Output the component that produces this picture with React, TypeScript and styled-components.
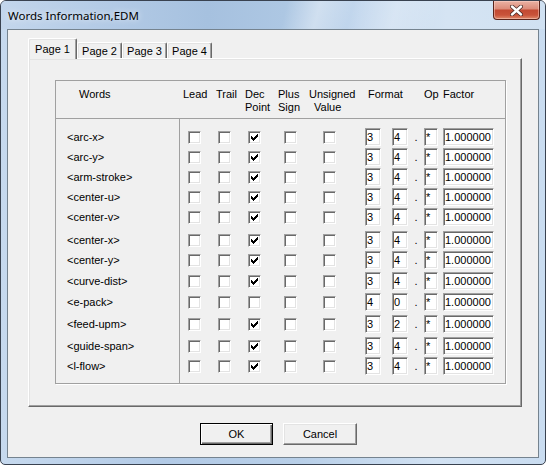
import React from "react";
import styled, { createGlobalStyle, css } from "styled-components";

const GlobalStyle = createGlobalStyle`
  html, body {
    margin: 0;
    padding: 0;
    background: #ffffff;
  }
  body {
    width: 546px;
    height: 465px;
    overflow: hidden;
  }
`;

type Word = {
  name: string;
  dec: boolean;
  fmt: [string, string];
  h: number;
};

// row heights copied from the dialog: rows are not evenly spaced
const words: Word[] = [
  { name: "<arc-x>", dec: true, fmt: ["3", "4"], h: 20 },
  { name: "<arc-y>", dec: true, fmt: ["3", "4"], h: 20 },
  { name: "<arm-stroke>", dec: true, fmt: ["3", "4"], h: 20 },
  { name: "<center-u>", dec: true, fmt: ["3", "4"], h: 20 },
  { name: "<center-v>", dec: true, fmt: ["3", "4"], h: 20 },
  { name: "<center-x>", dec: true, fmt: ["3", "4"], h: 23 },
  { name: "<center-y>", dec: true, fmt: ["3", "4"], h: 20 },
  { name: "<curve-dist>", dec: true, fmt: ["3", "4"], h: 21 },
  { name: "<e-pack>", dec: false, fmt: ["4", "0"], h: 21 },
  { name: "<feed-upm>", dec: true, fmt: ["3", "2"], h: 22 },
  { name: "<guide-span>", dec: true, fmt: ["3", "4"], h: 22 },
  { name: "<l-flow>", dec: true, fmt: ["3", "4"], h: 20 },
];

const tabs = ["Page 1", "Page 2", "Page 3", "Page 4"];

const Window = styled.div`
  width: 546px;
  height: 465px;
  box-sizing: border-box;
  display: flex;
  flex-direction: column;
  border: 1px solid #394250;
  border-radius: 6px 6px 5px 5px;
  overflow: hidden;
  background: linear-gradient(
    90deg,
    #c6d9ee 0%,
    #b2cae6 30%,
    #b8cfe8 55%,
    #d2e2f3 80%,
    #c9dcf0 100%
  );
  font-family: "Liberation Sans", Arial, sans-serif;
  font-size: 11px;
  color: #000;
`;

const TitleBar = styled.div`
  flex: none;
  height: 28px;
  display: flex;
  align-items: flex-start;
  justify-content: space-between;
  padding-left: 7px;
  background:
    linear-gradient(
      105deg,
      rgba(255, 255, 255, 0) 0%,
      rgba(255, 255, 255, 0) 52%,
      rgba(255, 255, 255, 0.35) 58%,
      rgba(255, 255, 255, 0) 64%,
      rgba(255, 255, 255, 0.25) 72%,
      rgba(255, 255, 255, 0) 80%
    ),
    linear-gradient(
      90deg,
      #c3d6ec 0%,
      #b4cbe6 18%,
      #a6c1df 38%,
      #adc7e3 52%,
      #c4d8ee 66%,
      #d5e4f3 82%,
      #d0e1f2 100%
    );
`;

const Caption = styled.span`
  margin-top: 8px;
  line-height: 14px;
  font-family: "Noto Sans", "Open Sans", sans-serif;
  font-size: 11.5px;
  color: #000;
  text-shadow: 0 0 6px rgba(255, 255, 255, 0.9);
`;

const CloseButton = styled.div`
  width: 47px;
  height: 19px;
  margin-right: 5px;
  box-sizing: border-box;
  display: flex;
  align-items: center;
  justify-content: center;
  border: 1px solid #5a241b;
  border-top: none;
  border-radius: 0 0 4px 4px;
  background: linear-gradient(
    180deg,
    #eab2a4 0%,
    #dc8d7b 42%,
    #c34a33 52%,
    #c9533a 78%,
    #e08a6c 100%
  );
  box-shadow: inset 0 0 0 1px rgba(255, 220, 210, 0.45);
`;

const FrameBody = styled.div`
  flex: 1;
  display: flex;
  padding: 0 6px 6px 6px;
`;

const Client = styled.div`
  flex: 1;
  box-sizing: border-box;
  display: flex;
  flex-direction: column;
  border: 1px solid #75838f;
  background: #f0f0f0;
  padding: 8px 0 0 20px;
`;

const TabStrip = styled.div`
  height: 20px;
  display: flex;
  align-items: flex-end;
  padding-left: 2px;
`;

const Tab = styled.div<{ $active?: boolean }>`
  box-sizing: border-box;
  width: 45px;
  height: 16px;
  padding-top: 1px;
  line-height: 14px;
  text-align: center;
  background: #f0f0f0;
  border-left: 1px solid #ffffff;
  border-top: 1px solid #ffffff;
  border-right: 1px solid #696969;
  border-radius: 2px 2px 0 0;
  box-shadow: inset -1px 0 0 #a0a0a0, inset 1px 1px 0 #e3e3e3;
  ${(p) =>
    p.$active &&
    css`
      position: relative;
      z-index: 1;
      width: 49px;
      height: 21px;
      margin-left: -2px;
      margin-bottom: -1px;
      padding-top: 3px;
    `}
`;

const TabPanel = styled.div`
  box-sizing: border-box;
  width: 494px;
  height: 349px;
  border: 1px solid;
  border-color: #ffffff #696969 #696969 #ffffff;
  box-shadow: inset -1px -1px 0 #a0a0a0, inset 1px 1px 0 #e3e3e3;
  padding: 21px 0 0 26px;
`;

const GridBox = styled.div`
  box-sizing: border-box;
  width: 451px;
  height: 304px;
  border: 1px solid #a0a0a0;
  box-shadow: 1px 1px 0 #ffffff;
  display: flex;
  flex-direction: column;
`;

const HeaderRow = styled.div`
  height: 38px;
  box-sizing: border-box;
  display: grid;
  grid-template-columns: 127px 33px 29px 33px 31px 59px 56px 19px auto;
  padding-top: 7px;
  line-height: 13px;
  border-bottom: 1px solid #a0a0a0;
`;

const HeaderCell = styled.div<{ $pl?: number }>`
  padding-left: ${(p) => p.$pl ?? 0}px;
  white-space: nowrap;
`;

const SubLine = styled.span<{ $pl?: number }>`
  display: block;
  padding-left: ${(p) => p.$pl ?? 0}px;
`;

const Body = styled.div`
  flex: 1;
  display: flex;
`;

const WordsCol = styled.div`
  width: 124px;
  box-sizing: border-box;
  padding: 8px 0 0 11px;
  border-right: 1px solid #a0a0a0;
`;

const FieldsCol = styled.div`
  flex: 1;
  padding: 8px 0 0 8px;
`;

const WordRow = styled.div<{ $h: number }>`
  height: ${(p) => p.$h}px;
  display: flex;
  align-items: flex-end;
`;

const WordLabel = styled.div`
  height: 20px;
  line-height: 20px;
  white-space: nowrap;
`;

const FieldRow = styled.div<{ $h: number }>`
  height: ${(p) => p.$h}px;
  display: grid;
  grid-template-columns: 30px 30px 36px 39px 42px auto;
  align-items: end;
`;

const Cell = styled.div`
  height: 20px;
  display: flex;
  align-items: center;
`;

const CheckBox = styled.div`
  width: 13px;
  height: 13px;
  box-sizing: border-box;
  padding: 2px;
  display: flex;
  background: #ffffff;
  border: 1px solid;
  border-color: #a0a0a0 #ffffff #ffffff #a0a0a0;
  box-shadow: inset 1px 1px 0 #696969, inset -1px -1px 0 #e3e3e3;
`;

const EditBox = styled.div<{ $w: number; $ml?: number }>`
  width: ${(p) => p.$w}px;
  height: 18px;
  margin-left: ${(p) => p.$ml ?? 0}px;
  box-sizing: border-box;
  padding-left: 1px;
  line-height: 16px;
  background: #ffffff;
  border: 1px solid;
  border-color: #a0a0a0 #ffffff #ffffff #a0a0a0;
  box-shadow: inset 1px 1px 0 #696969, inset -1px -1px 0 #e3e3e3;
  overflow: hidden;
  white-space: nowrap;
`;

const Dot = styled.div`
  width: 16px;
  height: 20px;
  line-height: 20px;
  text-align: center;
`;

const ButtonRow = styled.div`
  display: flex;
  gap: 10px;
  margin-top: 16px;
  padding-left: 172px;
`;

const PushButton = styled.button<{ $w: number; $default?: boolean }>`
  width: ${(p) => p.$w}px;
  height: 22px;
  box-sizing: border-box;
  padding: 0;
  margin: 0;
  background: #f0f0f0;
  font-family: "Liberation Sans", Arial, sans-serif;
  font-size: 11px;
  color: #000;
  border: 1px solid;
  border-color: #ffffff #696969 #696969 #ffffff;
  box-shadow: inset -1px -1px 0 #a0a0a0, inset 1px 1px 0 #e3e3e3;
  ${(p) =>
    p.$default &&
    css`
      border-color: #000000;
      box-shadow: inset 1px 1px 0 #ffffff, inset -1px -1px 0 #696969,
        inset -2px -2px 0 #a0a0a0;
    `}
`;

const CheckMark: React.FC = () => (
  <svg width="7" height="7" viewBox="0 0 7 7" shapeRendering="crispEdges">
    <path
      fill="#000"
      d="M6 0h1v1h-1z M5 1h2v1h-2z M0 2h1v1h-1z M4 2h3v1h-3z M0 3h2v1h-2z M3 3h3v1h-3z M0 4h5v1h-5z M1 5h3v1h-3z M2 6h1v1h-1z"
    />
  </svg>
);

const CloseGlyph: React.FC = () => (
  <svg width="13" height="11" viewBox="0 0 13 11">
    <path
      d="M2 1.5 L11 9.5 M11 1.5 L2 9.5"
      stroke="#4a2a26"
      strokeWidth="4"
      strokeLinecap="round"
      fill="none"
    />
    <path
      d="M2 1.5 L11 9.5 M11 1.5 L2 9.5"
      stroke="#ffffff"
      strokeWidth="2.4"
      strokeLinecap="round"
      fill="none"
    />
  </svg>
);

const Check: React.FC<{ on?: boolean }> = ({ on }) => (
  <Cell>
    <CheckBox>{on && <CheckMark />}</CheckBox>
  </Cell>
);

const App: React.FC = () => {
  return (
    <>
      <GlobalStyle />
      <Window>
        <TitleBar>
          <Caption>Words Information,EDM</Caption>
          <CloseButton>
            <CloseGlyph />
          </CloseButton>
        </TitleBar>
        <FrameBody>
          <Client>
            <TabStrip>
              {tabs.map((t, i) => (
                <Tab key={t} $active={i === 0}>
                  {t}
                </Tab>
              ))}
            </TabStrip>
            <TabPanel>
              <GridBox>
                <HeaderRow>
                  <HeaderCell $pl={23}>Words</HeaderCell>
                  <HeaderCell>Lead</HeaderCell>
                  <HeaderCell>Trail</HeaderCell>
                  <HeaderCell>
                    Dec
                    <SubLine>Point</SubLine>
                  </HeaderCell>
                  <HeaderCell>
                    Plus
                    <SubLine>Sign</SubLine>
                  </HeaderCell>
                  <HeaderCell>
                    Unsigned
                    <SubLine $pl={5}>Value</SubLine>
                  </HeaderCell>
                  <HeaderCell>Format</HeaderCell>
                  <HeaderCell>Op</HeaderCell>
                  <HeaderCell>Factor</HeaderCell>
                </HeaderRow>
                <Body>
                  <WordsCol>
                    {words.map((w) => (
                      <WordRow key={w.name} $h={w.h}>
                        <WordLabel>{w.name}</WordLabel>
                      </WordRow>
                    ))}
                  </WordsCol>
                  <FieldsCol>
                    {words.map((w) => (
                      <FieldRow key={w.name} $h={w.h}>
                        <Check />
                        <Check />
                        <Check on={w.dec} />
                        <Check />
                        <Check />
                        <Cell>
                          <EditBox $w={16}>{w.fmt[0]}</EditBox>
                          <EditBox $w={16} $ml={11}>
                            {w.fmt[1]}
                          </EditBox>
                          <Dot>.</Dot>
                          <EditBox $w={14}>*</EditBox>
                          <EditBox $w={51} $ml={5}>
                            1.000000
                          </EditBox>
                        </Cell>
                      </FieldRow>
                    ))}
                  </FieldsCol>
                </Body>
              </GridBox>
            </TabPanel>
            <ButtonRow>
              <PushButton $w={73} $default>
                OK
              </PushButton>
              <PushButton $w={74}>Cancel</PushButton>
            </ButtonRow>
          </Client>
        </FrameBody>
      </Window>
    </>
  );
};

export default App;
